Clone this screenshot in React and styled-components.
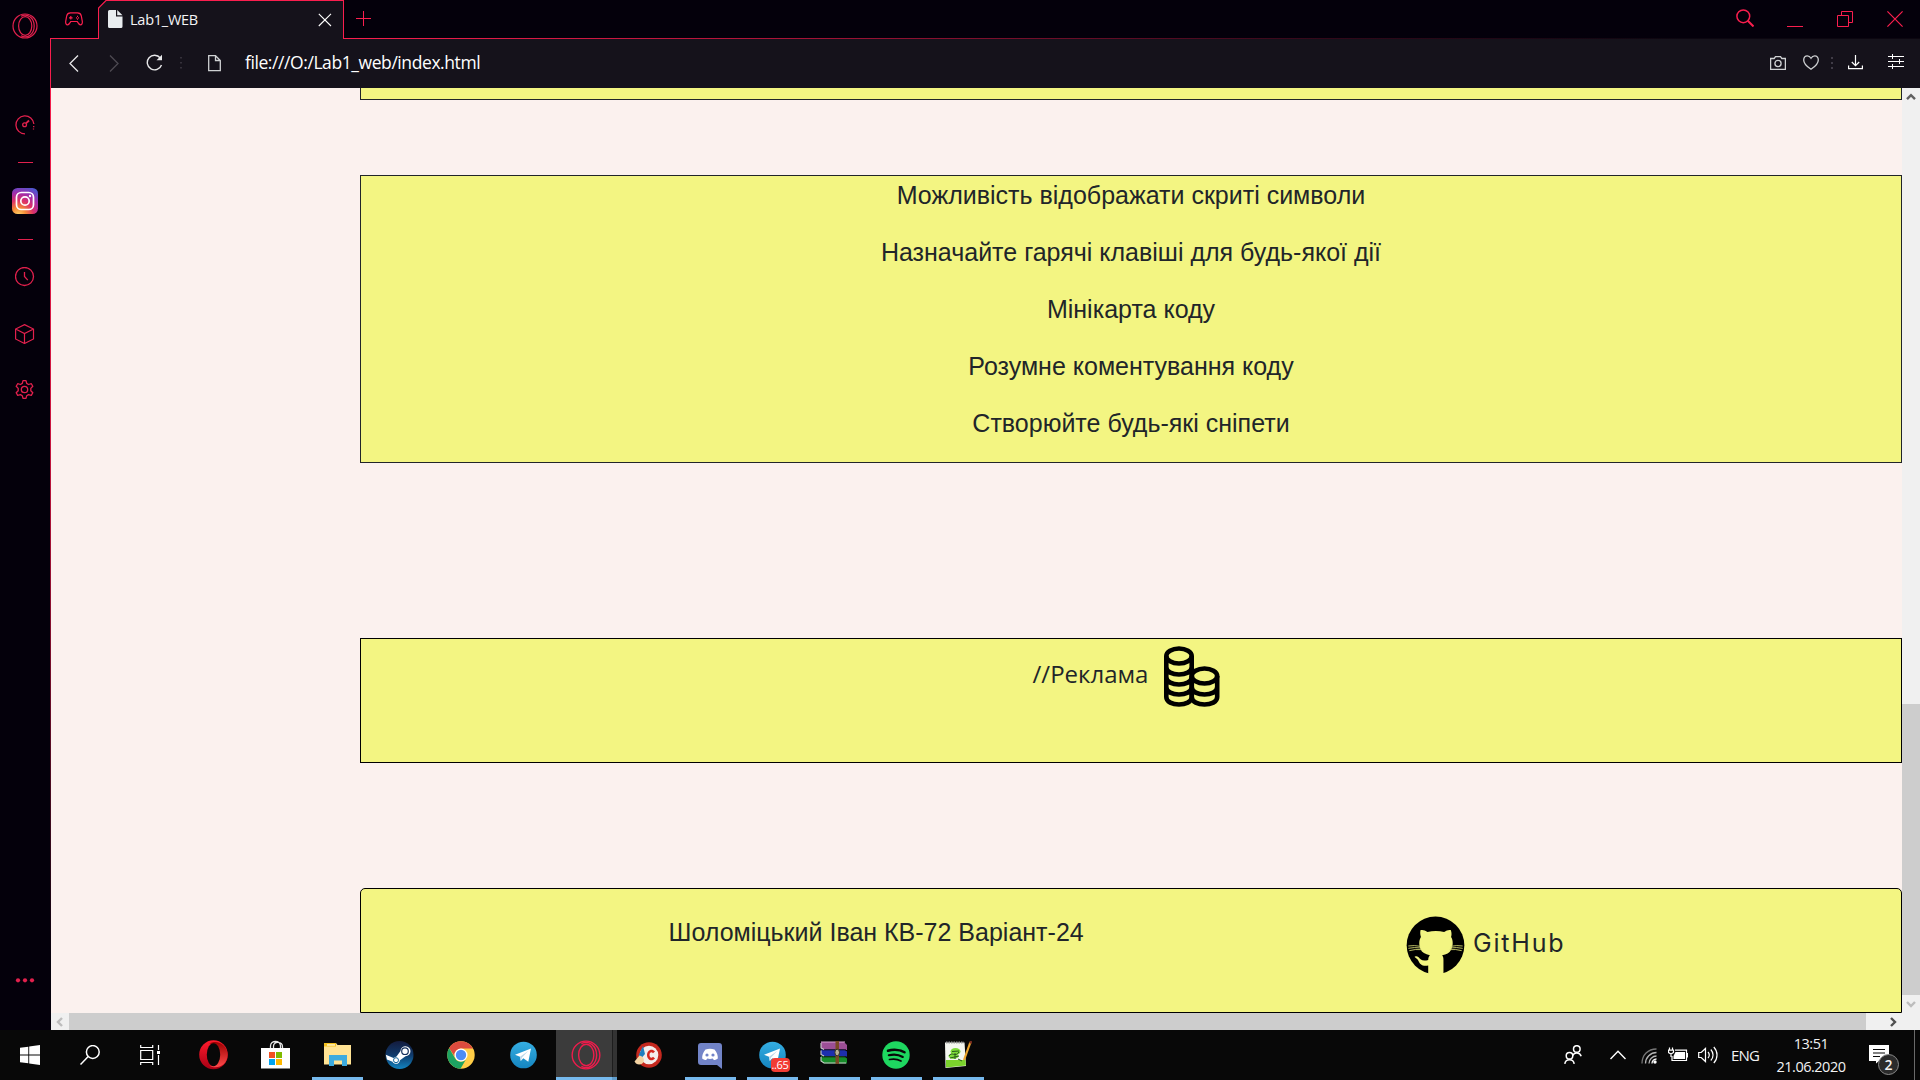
import React from "react";
import styled, { createGlobalStyle } from "styled-components";

const RED = "#fa1e4e";
const DIM = "#e2204d";

const Global = createGlobalStyle`
  * { box-sizing: border-box; }
  body { margin: 0; background: #080808; overflow: hidden; }
  svg { display: block; flex: none; }
`;

const Screen = styled.div`
  width: 1920px;
  height: 1080px;
  display: flex;
  flex-direction: column;
  font-family: "Open Sans", "Noto Sans", sans-serif;
`;
const Browser = styled.div`
  height: 1030px;
  display: flex;
  background: #04000b;
`;
const Sidebar = styled.nav`
  width: 50px;
  display: flex;
  flex-direction: column;
  padding-top: 12.5px;
`;
const SideItem = styled.div`
  height: ${(p) => p.$h}px;
  margin-top: ${(p) => p.$gap || 0}px;
  padding-left: ${(p) => p.$left}px;
`;
const SideRule = styled.div`
  width: 15px;
  height: 1px;
  margin: ${(p) => p.$top}px 0 0 18px;
  background: ${DIM};
`;
const Main = styled.div`
  flex: 1;
  display: flex;
  flex-direction: column;
`;
const TabBar = styled.header`
  height: 39px;
  display: flex;
`;
const Underline = styled.div`
  height: 39px;
  display: flex;
  align-items: flex-start;
  width: ${(p) => (p.$w ? p.$w + "px" : "auto")};
  flex: ${(p) => (p.$grow ? 1 : "none")};
  padding-left: ${(p) => p.$left}px;
  background: ${(p) =>
    p.$grow
      ? `linear-gradient(90deg, ${RED}, #b3143a 25%, #33081a 62%, #0c0610 85%)`
      : `linear-gradient(${RED}, ${RED})`}
    left bottom / 100% 1px no-repeat;
`;
const TabShape = styled.div`
  position: relative;
  width: 246px;
  height: 39px;
  display: flex;
  align-items: flex-start;
  padding: 9px 0 0 9px;
  background: #15121b;
  border: 1px solid ${RED};
  border-bottom: 0;
`;
const Bevel = styled.svg`
  position: absolute;
  left: -1px;
  top: -1px;
`;
const TabTitle = styled.span`
  width: 188px;
  margin-left: 7px;
  padding-top: 1px;
  font-size: 14.5px;
  line-height: 18px;
  letter-spacing: -0.25px;
  color: #f4f4f6;
`;
const Slot = styled.div`
  margin: ${(p) => p.$top || 0}px 0 0 ${(p) => p.$left || 0}px;
`;
const Body = styled.div`
  flex: 1;
  display: flex;
  flex-direction: column;
  border-left: 1px solid;
  border-image: linear-gradient(#fa1e4e, #c9153f 40%, #3a0a1d 80%, #04000b 93%) 1;
`;
const Toolbar = styled.div`
  height: 49px;
  display: flex;
  background: #15121b;
`;
const Url = styled.span`
  width: 1518px;
  margin-left: 24px;
  font-size: 17.5px;
  line-height: 24px;
  padding-top: 11px;
  letter-spacing: -0.42px;
  color: #fff;
`;
const View = styled.div`
  height: 925px;
  display: flex;
`;
const Page = styled.main`
  width: 1851px;
  height: 925px;
  overflow: hidden;
  background: #fbf1ee;
  padding-left: 309px;
  color: #212529;
`;
const Card = styled.section`
  height: ${(p) => p.$h}px;
  margin-top: ${(p) => p.$gap || 0}px;
  background: #f3f582;
  border: 1px solid ${(p) => p.$line || "#000"};
  border-top-width: ${(p) => (p.$cut ? 0 : 1)}px;
  border-radius: ${(p) => (p.$round ? "5px 5px 0 0" : 0)};
  display: flex;
  justify-content: center;
`;
const List = styled.ul`
  margin: 0;
  padding: 1px 0 0;
  list-style: none;
  text-align: center;
`;
const Feature = styled.li`
  height: 57px;
  font: 25px/37px "Liberation Sans", Arial, sans-serif;
`;
const AdText = styled.span`
  margin-top: 17px;
  font: 400 24px/36px "Open Sans", "Noto Sans", sans-serif;
`;
const Coins = styled.div`
  margin: 7px 9px 0 16px;
`;
const FooterRow = styled.div`
  flex: 1;
  display: flex;
  padding-left: 307.5px;
`;
const Author = styled.span`
  width: 737.5px;
  margin-top: 25px;
  font: 25px/37px "Liberation Sans", Arial, sans-serif;
`;
const GitText = styled.span`
  margin: 36px 0 0 8px;
  font: 400 25px/36px Inter, sans-serif;
  letter-spacing: 1.8px;
`;
const VBar = styled.div`
  width: 18px;
  height: 925px;
  display: flex;
  flex-direction: column;
  background: #f0f0f0;
`;
const HBar = styled.div`
  height: 17px;
  display: flex;
  background: #f0f0f0;
`;
const Arrow = styled.div`
  width: 18px;
  height: ${(p) => (p.$flat ? 17 : 18)}px;
  display: grid;
  place-items: center;
`;
const VThumb = styled.div`
  height: 291px;
  margin-top: 598px;
  background: #cdcdcd;
`;
const HThumb = styled.div`
  width: 1797px;
  margin-right: 18px;
  background: #cdcdcd;
`;
const Taskbar = styled.footer`
  height: 50px;
  display: flex;
  background: #080808;
`;
const Task = styled.div`
  flex: none;
  width: ${(p) => p.$w}px;
  height: 50px;
  display: flex;
  flex-direction: column;
  align-items: center;
  padding-top: ${(p) => p.$top}px;
  background: ${(p) =>
    p.$open
      ? "linear-gradient(#76b9ed, #76b9ed) 6px 100% / 51px 3px no-repeat"
      : "none"};
`;
const ActiveTask = styled(Task)`
  background: linear-gradient(#76b9ed, #76b9ed) 0 100% / 56px 3px no-repeat,
    linear-gradient(#5f9bc9, #5f9bc9) 56px 100% / 5px 3px no-repeat,
    linear-gradient(90deg, #3b3b3b 56px, #1d1d1d 56px, #1d1d1d 57px, #333 57px);
  margin-left: 1px;
  align-items: flex-start;
  padding-left: 15px;
`;
const Badge = styled.span`
  position: absolute;
  left: 12px;
  top: 17px;
  width: 19px;
  height: 14px;
  border-radius: 4px;
  background: #f23c34;
  color: #fff;
  font-size: 11px;
  line-height: 13px;
  letter-spacing: -0.3px;
  text-align: center;
`;
const BadgeHost = styled.div`
  position: relative;
`;
const Tray = styled.div`
  flex: none;
  width: 931px;
  display: flex;
  padding-left: 575px;
  color: #f2f2f2;
`;
const Lang = styled.span`
  width: 31px;
  margin: 15px 0 0 13px;
  font-size: 15px;
  line-height: 20px;
  letter-spacing: -0.8px;
`;
const Clock = styled.div`
  width: 78px;
  margin-left: 10px;
  padding-top: 2px;
  font-size: 14.5px;
  line-height: 23px;
  letter-spacing: -0.5px;
  text-align: center;
`;
const Note = styled.div`
  position: relative;
  margin: 15px 0 0 19px;
`;
const Count = styled.span`
  position: absolute;
  left: 9px;
  top: 9px;
  width: 21px;
  height: 21px;
  border: 1px solid #8a8a8a;
  border-radius: 50%;
  background: #2b2b2b;
  font-size: 14px;
  font-weight: 600;
  line-height: 19px;
  text-align: center;
`;
const DesktopEdge = styled.div`
  width: 1px;
  height: 50px;
  margin-left: 25px;
  background: #6a6a6a;
`;

const Ico = ({ w, h, c = "#e8e8ea", s = 1.3, children, vb }) => (
  <svg
    width={w}
    height={h}
    viewBox={vb || `0 0 ${w} ${h}`}
    fill="none"
    stroke={c}
    strokeWidth={s}
  >
    {children}
  </svg>
);

const OperaGX = ({ size, c }) => (
  <Ico w={size} h={size} vb="0 0 26 26" c={c} s={1.2}>
    <circle cx="13" cy="13" r="12" />
    <ellipse cx="13.2" cy="13" rx="6.6" ry="9.3" />
    <path d="M9 3.2C15.500-.2 22.200 5 22.200 13S15.500 26.200 9 22.800" />
  </Ico>
);

const TelegramIcon = () => (
  <svg width="27" height="28" viewBox="0 0 27 28">
    <defs>
      <linearGradient id="tg" x1="0" y1="0" x2="0" y2="1">
        <stop offset="0" stopColor="#35aee2" />
        <stop offset="1" stopColor="#1585c0" />
      </linearGradient>
    </defs>
    <circle cx="13.500" cy="14" r="13.300" fill="url(#tg)" />
    <path d="M5 13.700 21 7.500 18.300 20.800 13.300 17.300 10.800 20 10 15.700z" fill="#fff" />
    <path d="M10 15.700 18.500 9.800 12 16.500 10.800 20z" fill="#bcd9ea" />
  </svg>
);

const Chev = ({ d, c }) => (
  <svg width="10" height="10" viewBox="0 0 10 10" fill="none" stroke={c} strokeWidth="2.400">
    <path d={d} />
  </svg>
);

const features = [
  "Можливість відображати скриті символи",
  "Назначайте гарячі клавіші для будь-якої дії",
  "Мінікарта коду",
  "Розумне коментування коду",
  "Створюйте будь-які сніпети",
];

function SidePanel() {
  return (
    <Sidebar>
      <SideItem $h={26} $left={12}>
        <OperaGX size={26} c={DIM} />
      </SideItem>
      <SideItem $h={20} $gap={76.5} $left={15}>
        <Ico w={20} h={20} c={DIM}>
          <path d="M10 18.900A9 9 0 1 1 18.900 9M18.700 11v1.200M18.500 13.500v1" />
          <circle cx="9.600" cy="9.800" r="1.900" />
          <path d="M11 8.400 14 5.500" strokeWidth="1.800" />
        </Ico>
      </SideItem>
      <SideRule $top={27} />
      <SideItem $h={26} $gap={25} $left={12}>
        <svg width="26" height="26" viewBox="0 0 26 26">
          <defs>
            <radialGradient id="ig" cx=".25" cy="1.050" r="1.150">
              <stop offset="0" stopColor="#fed76a" />
              <stop offset=".25" stopColor="#f58a38" />
              <stop offset=".5" stopColor="#dd3168" />
              <stop offset=".75" stopColor="#a12eac" />
              <stop offset="1" stopColor="#5155cf" />
            </radialGradient>
          </defs>
          <rect width="26" height="26" rx="5.500" fill="url(#ig)" />
          <g fill="none" stroke="#fff" strokeWidth="1.700">
            <rect x="4.500" y="4.500" width="17" height="17" rx="4.800" />
            <circle cx="13" cy="13" r="4.200" />
          </g>
          <circle cx="18" cy="8" r="1.200" fill="#fff" />
        </svg>
      </SideItem>
      <SideRule $top={25} />
      <SideItem $h={20} $gap={27} $left={15}>
        <Ico w={20} h={20} c={DIM}>
          <circle cx="9.500" cy="9.500" r="9" />
          <path d="M9.500 5v4.500l3.300 3.600" />
        </Ico>
      </SideItem>
      <SideItem $h={20} $gap={37} $left={15}>
        <Ico w={20} h={20} c={DIM} s={1.200}>
          <path d="M9.500.6 18.500 5v10L9.500 19.500.6 15V5zM.6 5l8.900 4.500L18.500 5M9.500 9.500v10" />
        </Ico>
      </SideItem>
      <SideItem $h={20} $gap={36} $left={15}>
        <Ico w={20} h={20} c={DIM} s={1.300}>
          <circle cx="9.500" cy="9.500" r="3.200" />
          <path
            strokeLinejoin="round"
            d="M8 .7h3l.7 2.700 1.800 1.100 2.800-.8 1.500 2.600-2 2.100v2.300l2 2.100-1.500 2.600-2.800-.8-1.800 1.100-.7 2.700H8l-.7-2.700-1.800-1.100-2.800.8-1.500-2.600 2-2.100V8.400l-2-2.100 1.500-2.600 2.800.8 1.800-1.100z"
          />
        </Ico>
      </SideItem>
      <SideItem $h={5} $gap={578} $left={15}>
        <svg width="20" height="5" viewBox="0 0 20 5" fill={DIM}>
          <circle cx="3" cy="2.300" r="2.100" />
          <circle cx="10" cy="2.300" r="2.100" />
          <circle cx="17" cy="2.300" r="2.100" />
        </svg>
      </SideItem>
    </Sidebar>
  );
}

function Tabs() {
  return (
    <TabBar>
      <Underline $w={48} $left={15}>
        <Slot $top={12}>
          <Ico w={18} h={14} c={RED} s={1.200}>
            <path d="M5.500.8h7c2.300 0 3.300.8 3.800 3l1 5.500c.3 2.300-.6 3.500-1.800 3.500-1.500 0-2.300-1.500-3.300-3.300H5.800c-1 1.800-1.800 3.300-3.300 3.300-1.200 0-2.100-1.200-1.800-3.500l1-5.500c.5-2.200 1.500-3 3.800-3z" />
            <path d="M4 5.800h3.600M5.800 4v3.600M11 5.800h1M13 5.800h1M12 4.300h1M12 7.200h1" />
          </Ico>
        </Slot>
      </Underline>
      <TabShape>
        <Bevel width="9" height="9" viewBox="0 0 9 9">
          <path d="M0 0H9V0L0 8.500z" fill="#04000b" />
          <path d="M.5 9V8L8 .5H9" fill="none" stroke={RED} strokeWidth="1.200" />
        </Bevel>
        <svg width="15" height="18" viewBox="0 0 15 18" fill="#e8ecef">
          <path d="M1.500 0H8v6.500h6.500V16.500a1.500 1.500 0 0 1-1.500 1.500H1.500A1.500 1.500 0 0 1 0 16.500v-15A1.500 1.500 0 0 1 1.500 0zM9.200 0l5.300 5.300H9.200z" />
        </svg>
        <TabTitle>Lab1_WEB</TabTitle>
        <Slot $top={3}>
          <Ico w={14} h={14} s={1.100} c="#fff">
            <path d="M.8.8 13 13M13 .8.8 13" />
          </Ico>
        </Slot>
      </TabShape>
      <Underline $grow $left={12}>
        <Slot $top={11}>
          <Ico w={15} h={15} c={RED} s={1}>
            <path d="M7.500 0v15M0 7.500h15" />
          </Ico>
        </Slot>
        <Slot $top={9} $left={1365}>
          <Ico w={18} h={18} c={RED} s={1.500}>
            <circle cx="7.300" cy="7.300" r="6.400" />
            <path d="m11.800 11.800 5.700 5.700" strokeWidth="2" />
          </Ico>
        </Slot>
        <Slot $top={26} $left={33}>
          <Ico w={16} h={1} c={RED} s={1}>
            <path d="M0 .5h16" />
          </Ico>
        </Slot>
        <Slot $top={11} $left={34}>
          <Ico w={16} h={16} c={RED} s={1}>
            <path d="M.5 4.500h11v11H.5zM4.500 4.500v-4h11v11h-4" />
          </Ico>
        </Slot>
        <Slot $top={11} $left={34}>
          <Ico w={16} h={16} c={RED} s={1.200}>
            <path d="m.4.4 15.200 15.200M15.600.4.4 15.600" />
          </Ico>
        </Slot>
      </Underline>
    </TabBar>
  );
}

function AddressBar() {
  return (
    <Toolbar>
      <Slot $top={16} $left={18}>
        <Ico w={10} h={17}>
          <path d="M9 .5 1 8.500l8 8" />
        </Ico>
      </Slot>
      <Slot $top={16} $left={30}>
        <Ico w={10} h={17} c="#4d4a52">
          <path d="m1 .5 8 8-8 8" />
        </Ico>
      </Slot>
      <Slot $top={15} $left={27}>
        <Ico w={17} h={17} s={1.400}>
          <path d="M14.300 4A7.300 7.300 0 1 0 15.500 11" />
          <path d="M16 .8v5.400h-5.500z" fill="#e8e8ea" stroke="none" />
        </Ico>
      </Slot>
      <Slot $top={18} $left={17}>
        <Ico w={2} h={12} c="#403c47" s={1.500}>
          <path d="M1 0v1.500M1 5v1.500M1 10v1.500" />
        </Ico>
      </Slot>
      <Slot $top={16} $left={26}>
        <Ico w={13} h={17} c="#cfd1d3">
          <path d="M.7.7h6.800l4.800 4.800v10.200H.7zM7.500.7v4.800h4.800" />
        </Ico>
      </Slot>
      <Url>file:///O:/Lab1_web/index.html</Url>
      <Slot $top={17} $left={7}>
        <Ico w={16} h={14} c="#cfd1d3">
          <path d="M.6 2.500h3.600L5.500.7h5l1.300 1.800h3.600v10.800H.6z" />
          <circle cx="8" cy="7.500" r="3.100" />
        </Ico>
      </Slot>
      <Slot $top={16} $left={17}>
        <Ico w={16} h={15} c="#cfd1d3">
          <path d="M8 14.200C4.500 12 .7 9 .7 5 .7 2.400 2.300.8 4.200.8 6 .8 7.200 1.900 8 3.300 8.800 1.900 10 .8 11.800.8c1.900 0 3.500 1.600 3.500 4.200 0 4-3.800 7-7.300 9.200z" />
        </Ico>
      </Slot>
      <Slot $top={18} $left={12}>
        <Ico w={2} h={12} c="#403c47" s={2}>
          <path d="M1 0v2M1 5v2M1 10v2" />
        </Ico>
      </Slot>
      <Slot $top={16} $left={15}>
        <Ico w={15} h={15} c="#fff" s={1.200}>
          <path d="M7.500 0v10.500M3.800 7l3.700 3.700L11.200 7M.6 10.500v3.200h13.800v-3.200" />
        </Ico>
      </Slot>
      <Slot $top={15} $left={25}>
        <Ico w={16} h={16} c="#fff" s={1}>
          <path d="M0 2.500h16M0 7.500h16M0 12.500h16M4.500 0v5M11.500 5v5M4.500 10v5" />
        </Ico>
      </Slot>
    </Toolbar>
  );
}

function SitePage() {
  return (
    <Page>
      <Card $cut $h={12} $line="#212529" />
      <Card $h={288} $gap={75} $line="#212529">
        <List>
          {features.map((f) => (
            <Feature key={f}>{f}</Feature>
          ))}
        </List>
      </Card>
      <Card $h={125} $gap={175}>
        <AdText>//Реклама</AdText>
        <Coins>
          <Ico w={56} h={62} c="#000" s={4.600}>
            <ellipse cx="15" cy="10" rx="12.700" ry="7.500" />
            <path d="M2.300 10v41c0 10 25.400 10 25.400 0V10M2.300 21c0 10 25.400 10 25.400 0M2.300 31c0 10 25.400 10 25.400 0M2.300 41c0 10 25.400 10 25.400 0" />
            <ellipse cx="40.500" cy="30" rx="12.700" ry="7.500" />
            <path d="M27.800 30v21c0 10 25.400 10 25.400 0V30M27.800 41c0 10 25.400 10 25.400 0" />
          </Ico>
        </Coins>
      </Card>
      <Card $h={125} $gap={125} $round>
        <FooterRow>
          <Author>Шоломіцький Іван КВ-72 Варіант-24</Author>
          <Slot $top={27}>
            <svg width="59" height="58" viewBox="77 107 178 174">
              <circle cx="166" cy="195" r="87" fill="#000" />
              <path
                fill="#f3f582"
                d="M121 149c7-2 14 1 21 6 16-4 34-4 50 0 7-5 14-8 20-6 3 8 3 14 1 21 7 10 6 27 0 38-5 10-14 14-27 17 3 4 4 8 4 14v50h-46v-33c-19 3-25-5-29-13-2-5-6-8-11-12-4-4 6-5 11 0 6 6 11 14 29 8 0-6 2-10 5-14-14-3-24-8-28-18-5-11-6-26 1-37-2-7-3-13-1-21z"
              />
              <path
                d="M84 197q18-3 36 1M84 204q18-4 37-1M87 211q18-5 36-3M248 197q-18-3-36 1M248 204q-18-4-37-1M245 211q-18-5-36-3"
                stroke="#d6d873"
                strokeWidth="2.600"
                fill="none"
              />
            </svg>
          </Slot>
          <GitText>GitHub</GitText>
        </FooterRow>
      </Card>
    </Page>
  );
}

function TaskIcons() {
  return (
    <>
      <Task $w={60} $top={15}>
        <svg width="20" height="20" viewBox="0 0 20 20" fill="#fff">
          <path d="M0 2.800 8.300 1.700V9.500H0zM9.200 1.500 20 0v9.500H9.200zM0 10.500h8.300v7.800L0 17.200zM9.200 10.500H20V20L9.200 18.500z" />
        </svg>
      </Task>
      <Task $w={60} $top={15}>
        <Ico w={20} h={20} c="#fff" s={1.500}>
          <circle cx="12.800" cy="7" r="6.400" />
          <path d="M8.200 11.600.5 19.500" />
        </Ico>
      </Task>
      <Task $w={61} $top={15}>
        <Ico w={21} h={20} c="#fff" s={1.200}>
          <path d="M.7 0v2.500h12V0M.7 5.500h12v9H.7zM.7 20v-2.500h12V20M18.500 0v5M18.500 10v10" />
          <path d="M17 6h3v3h-3z" fill="#fff" stroke="none" />
        </Ico>
      </Task>
      <Task $w={64} $top={10}>
        <svg width="29" height="30" viewBox="0 0 29 30">
          <defs>
            <linearGradient id="op" x1="0" y1="0" x2="0" y2="1">
              <stop offset="0" stopColor="#ff1b2d" />
              <stop offset="1" stopColor="#a70014" />
            </linearGradient>
            <linearGradient id="op2" x1="0" y1="0" x2="0" y2="1">
              <stop offset="0" stopColor="#9c0000" />
              <stop offset="1" stopColor="#ff4b4b" />
            </linearGradient>
          </defs>
          <ellipse cx="14.500" cy="14.700" rx="14.300" ry="14.500" fill="url(#op)" />
          <path d="M10 4c7-5 18.500 0 18.500 11S17 30 10 25.500c4 1.500 8-3 8-10.800S14 2.500 10 4z" fill="url(#op2)" />
          <ellipse cx="14.500" cy="14.700" rx="6.700" ry="11.500" fill="#080808" />
        </svg>
      </Task>
      <Task $w={61} $top={10}>
        <svg width="29" height="30" viewBox="0 0 29 30">
          <path d="M9.500 9V6c0-6 10-6 10 0v3M12.500 9V6c0-5 9-5 9 1v2" fill="none" stroke="#e8e8e8" strokeWidth="1.300" />
          <path d="M0 8h29v20.500H0z" fill="#fff" />
          <path d="M8 12h6v6H8z" fill="#f25022" />
          <path d="M15 12h6v6h-6z" fill="#7fba00" />
          <path d="M8 19h6v6H8z" fill="#00a4ef" />
          <path d="M15 19h6v6h-6z" fill="#ffb900" />
        </svg>
      </Task>
      <Task $w={63} $top={12} $open>
        <svg width="28" height="25" viewBox="0 0 28 25">
          <path d="M1 1h11l1.500 2H27v19.500H0V2z" fill="#ffe394" />
          <path d="M0 1h12v3.500H0z" fill="#f4c01e" />
          <path d="M3 2.200h8v1.500H3z" fill="#fff3c4" />
          <path d="M5 24V13h18v11h-5v-5.500h-8V24z" fill="#3cabdf" />
        </svg>
      </Task>
      <Task $w={61} $top={11}>
        <svg width="29" height="28" viewBox="0 0 29 28">
          <defs>
            <linearGradient id="st" x1="0" y1="0" x2="0" y2="1">
              <stop offset="0" stopColor="#141b3d" />
              <stop offset=".5" stopColor="#0f3a6b" />
              <stop offset="1" stopColor="#1384c0" />
            </linearGradient>
          </defs>
          <circle cx="14.500" cy="14" r="14" fill="url(#st)" />
          <path d="M.8 13.800 8.500 17l3-1.500 4-5.500a5 5 0 1 1 5 5.200l-5.500 4c-.6 4.200-5.700 4.800-7.500 1.500L2 18.500z" fill="#fff" />
          <circle cx="20" cy="10.200" r="3.300" fill="none" stroke="#17305c" strokeWidth="1.200" />
          <circle cx="11" cy="19.200" r="2.500" fill="none" stroke="#12639a" strokeWidth="1" />
        </svg>
      </Task>
      <Task $w={62} $top={11}>
        <svg width="28" height="28" viewBox="0 0 28 28">
          <circle cx="14" cy="14" r="13.700" fill="#ffcd46" />
          <path d="M2.100 7A13.700 13.700 0 0 1 26 7.500H14a6.500 6.500 0 0 0-6.300 8z" fill="#dc4b3e" />
          <path d="M2.100 7A13.700 13.700 0 0 0 13.500 27.700l6-10.200a6.500 6.500 0 0 1-11.300 0z" fill="#1da362" />
          <circle cx="14" cy="14" r="6.500" fill="#fff" />
          <circle cx="14" cy="14" r="5.200" fill="#4c8bf5" />
        </svg>
      </Task>
      <Task $w={63} $top={11}>
        <TelegramIcon />
      </Task>
      <ActiveTask $w={61} $top={10}>
        <OperaGX size={30} c="#ee1c4c" />
      </ActiveTask>
      <Task $w={62} $top={12}>
        <svg width="28" height="27" viewBox="0 0 28 27">
          <circle cx="15" cy="13" r="12.800" fill="#c4281e" />
          <circle cx="15" cy="13" r="9.300" fill="#f3eeec" />
          <path d="M21 9.500c-3-3.700-8-1.500-8 3.500s5 7 8 3.500l-2-1.800c-1.500 2-3.500.8-3.500-1.700s2-3.700 3.500-1.700z" fill="#d5281f" />
          <path d="m9 4 2 8-3 3.500-3.500-2z" fill="#1f7fc0" />
          <path d="M5.500 13.500c4 1 5 4 4 6.500-2 3-5 3-7.500 1.500l-1.500-2z" fill="#f4d3a2" />
        </svg>
      </Task>
      <Task $w={62} $top={13} $open>
        <svg width="24" height="26" viewBox="0 0 24 26">
          <path d="M3 0h18a3 3 0 0 1 3 3v23l-5-4H3a3 3 0 0 1-3-3V3a3 3 0 0 1 3-3z" fill="#7284c8" />
          <path d="M7.500 6.500c3-1 6-1 9 0 2.500 3 3.500 6 3.300 9-1.500 1.200-3 1.600-4 1.600l-1-1.600c-2 .5-3.600.5-5.600 0l-1 1.600c-1 0-2.500-.4-4-1.600-.2-3 .8-6 3.300-9z" fill="#fff" />
          <circle cx="9" cy="12" r="1.600" fill="#7284c8" />
          <circle cx="15" cy="12" r="1.600" fill="#7284c8" />
        </svg>
      </Task>
      <Task $w={62} $top={11} $open>
        <BadgeHost>
          <TelegramIcon />
          <Badge>..65</Badge>
        </BadgeHost>
      </Task>
      <Task $w={62} $top={11} $open>
        <svg width="28" height="24" viewBox="0 0 28 24">
          <path d="M1 1h23l3 3v5H4L1 7z" fill="#9c4f96" />
          <path d="M1 8.500h23l3 2v5H4l-3-2z" fill="#1d2fae" />
          <path d="M1 15h23l3 2.500v5H4L1 20z" fill="#178c2a" />
          <path d="M1 1h24" stroke="#d9a3d2" strokeWidth="1" />
          <path d="M2 8.800h24M2 15.800h24" stroke="#14101c" strokeWidth="1" />
          <path d="M1 2v5l3 1.500M1 9.500v4L4 15M1 16v4l3 2h22" fill="none" stroke="#ccc" strokeWidth="1.100" />
          <path d="M15.500 0h3.500v23h-3.500z" fill="#7a4a25" />
          <ellipse cx="17.200" cy="11.500" rx="2.300" ry="3.300" fill="#b9b096" stroke="#332" />
        </svg>
      </Task>
      <Task $w={62} $top={11} $open>
        <svg width="28" height="28" viewBox="0 0 28 28">
          <circle cx="14" cy="14" r="13.700" fill="#1ed760" />
          <g fill="none" stroke="#080808" strokeLinecap="round">
            <path d="M6 9.800c5-1.600 12-1.200 16.500 1.500" strokeWidth="2.500" />
            <path d="M6.800 14.300c5-1.300 10-.7 14 1.700" strokeWidth="2.100" />
            <path d="M7.500 18.500c4-.9 8-.5 11.500 1.500" strokeWidth="1.700" />
          </g>
        </svg>
      </Task>
      <Task $w={61} $top={11} $open>
        <svg width="28" height="28" viewBox="0 0 28 28">
          <path d="M1 1.500h19.500L22 25 1.500 27z" fill="#f5f7f0" />
          <path d="M2 19h19.500l.5 5.500L2 26.500z" fill="#7bd32c" />
          <path d="M2 1.500h18" stroke="#999" strokeDasharray="1.500 1" strokeWidth="2" />
          <ellipse cx="11.500" cy="10.500" rx="5" ry="3.500" fill="#7fdd3a" />
          <ellipse cx="9.500" cy="15" rx="5" ry="3" fill="#7fdd3a" />
          <path d="M5 15c3-5 6 2 10-4M6 17l9-2M11 12v6M8 10.500l7-.5M14 18l4 2" stroke="#2b5a1c" strokeWidth="1" fill="none" />
          <path d="M26.500 1 20 19" stroke="#eda52d" strokeWidth="2.200" />
          <path d="m27.200 0-.9 2.500" stroke="#7a2d20" strokeWidth="2.400" />
        </svg>
      </Task>
    </>
  );
}

function TrayArea() {
  return (
    <Tray>
      <Slot $top={15} $left={1}>
        <Ico w={18} h={19} c="#fff" s={1.500}>
          <circle cx="12.800" cy="4" r="3.300" />
          <path d="M8.800 10.500c1.500-3.500 7-3.500 8.400.8" />
          <circle cx="5.500" cy="10.700" r="3.300" />
          <path d="M.8 18.800c.8-5.500 8.600-5.500 9.400 0" />
        </Ico>
      </Slot>
      <Slot $top={20} $left={28}>
        <Ico w={16} h={10} c="#fff" s={1.400}>
          <path d="M.5 9 8 1.300 15.500 9" />
        </Ico>
      </Slot>
      <Slot $top={18} $left={15}>
        <Ico w={16} h={16} c="#fff" s={1.300}>
          <path d="M1 15.500C1 7 7 1 15.500 1" stroke="#777" />
          <path d="M4.500 15.500c0-6 5-11 11-11M8 15.500C8 11.500 11.500 8 15.500 8" stroke="#b5b5b5" />
          <path d="M11 15.500c0-2.500 2-4.500 4.500-4.500" />
          <circle cx="14" cy="14" r="1.700" fill="#fff" stroke="none" />
        </Ico>
      </Slot>
      <Slot $top={17} $left={11}>
        <Ico w={20} h={16} c="#fff" s={1.200}>
          <path d="M7 3.200h11.500v10.300H4V9" />
          <path d="M7.500 5h9.500v7H5.500V9z" fill="#fff" stroke="none" />
          <path d="M18.500 6.500h1v4" />
          <path d="M1.500.5v3M4.500.5v3M.5 3.200h5v2.300L3 7 .5 5.500zM3 7v3" />
        </Ico>
      </Slot>
      <Slot $top={16} $left={10}>
        <Ico w={20} h={18} c="#fff" s={1.200}>
          <path d="M.7 6.500h2.500L7.500 2.500v13L3.200 11.500H.7z" />
          <path d="M10 6c1.500 1.800 1.500 4.300 0 6M12.800 3.500c3 3.300 3 7.800 0 11M15.800 1c4.300 4.600 4.300 11.500 0 16" />
        </Ico>
      </Slot>
      <Lang>ENG</Lang>
      <Clock>
        13:51
        <br />
        21.06.2020
      </Clock>
      <Note>
        <svg width="20" height="19" viewBox="0 0 20 19">
          <path d="M0 0h20v16H10l-3 2.500V16H0z" fill="#fff" />
          <path d="M4 4.500h12M4 8h12M4 11.500h7" stroke="#080808" strokeWidth="1.200" />
        </svg>
        <Count>2</Count>
      </Note>
      <DesktopEdge />
    </Tray>
  );
}

export default function App() {
  return (
    <Screen>
      <Global />
      <Browser>
        <SidePanel />
        <Main>
          <Tabs />
          <Body>
            <AddressBar />
            <View>
              <SitePage />
              <VBar>
                <Arrow>
                  <Chev d="M1 7.200 5 3.200 9 7.200" c="#606060" />
                </Arrow>
                <VThumb />
                <Arrow>
                  <Chev d="M1 3 5 7 9 3" c="#bdbdbd" />
                </Arrow>
              </VBar>
            </View>
            <HBar>
              <Arrow $flat>
                <Chev d="M7 1 3 5 7 9" c="#bdbdbd" />
              </Arrow>
              <HThumb />
              <Arrow $flat>
                <Chev d="M3 1 7 5 3 9" c="#505050" />
              </Arrow>
            </HBar>
          </Body>
        </Main>
      </Browser>
      <Taskbar>
        <TaskIcons />
        <TrayArea />
      </Taskbar>
    </Screen>
  );
}
